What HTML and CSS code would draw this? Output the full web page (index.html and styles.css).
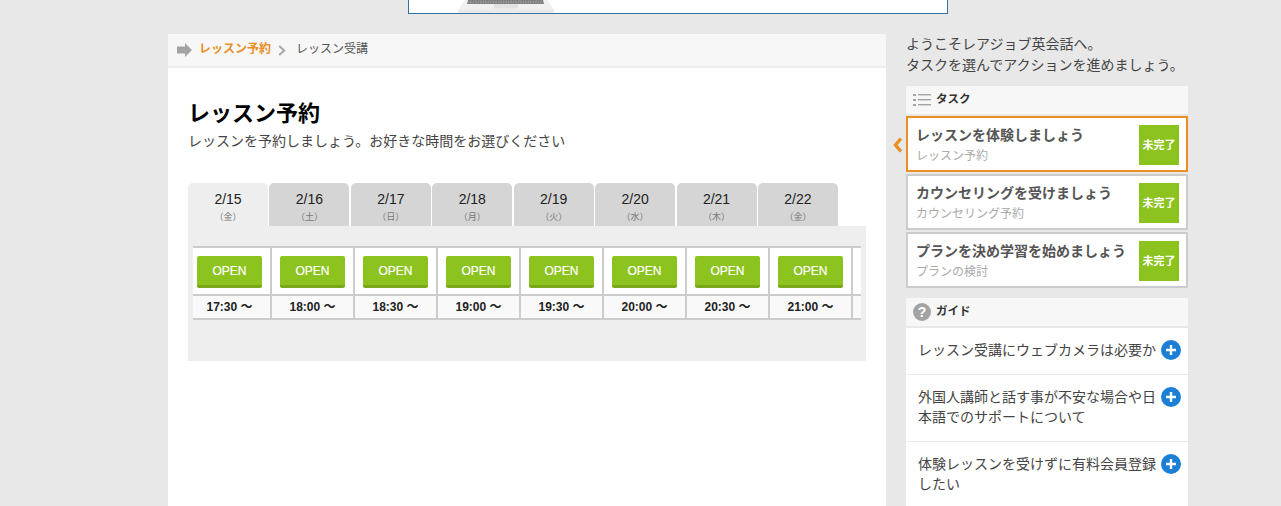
FILE: index.html
```html
<!DOCTYPE html>
<html lang="ja">
<head>
<meta charset="utf-8">
<title>レッスン予約</title>
<link rel="stylesheet" href="styles.css">
</head>
<body>
<div class="banner">
  <svg class="laptop" width="96" height="13" viewBox="0 0 96 13"><path d="M7 0H89L96 9.5V12.5H0V9.5Z" fill="#f0f0f0"/><path d="M0 10H96V12.5H0Z" fill="#e8e8e8"/><path d="M10 0H85L86 4H9Z" fill="#7a7a7a"/><path d="M10 1.2H85M9.5 2.8H85.5" stroke="#c4c4c4" stroke-width=".6" stroke-dasharray="1.5 1"/><rect x="36" y="4" width="24" height="4.5" fill="#e2e2e2"/></svg>
</div>
<div class="page">
  <main class="main">
    <nav class="crumb">
      <svg class="crumb-arrow" width="15" height="14" viewBox="0 0 15 14"><path d="M0 3.5H8V0L15 7L8 14V10.5H0Z" fill="#a3a3a3"/></svg>
      <span class="crumb-current">レッスン予約</span>
      <svg class="crumb-sep" width="8" height="11" viewBox="0 0 8 11"><path d="M1.2 1L6.2 5.5L1.2 10" fill="none" stroke="#a6a6a6" stroke-width="2"/></svg>
      <span class="crumb-next">レッスン受講</span>
    </nav>
    <div class="content">
      <h1 class="title">レッスン予約</h1>
      <p class="lead">レッスンを予約しましょう。お好きな時間をお選びください</p>
      <div class="tabs">
        <div class="tab tab-active"><span class="tab-date">2/15</span><span class="tab-day">（金）</span></div>
        <div class="tab"><span class="tab-date">2/16</span><span class="tab-day">（土）</span></div>
        <div class="tab"><span class="tab-date">2/17</span><span class="tab-day">（日）</span></div>
        <div class="tab"><span class="tab-date">2/18</span><span class="tab-day">（月）</span></div>
        <div class="tab"><span class="tab-date">2/19</span><span class="tab-day">（火）</span></div>
        <div class="tab"><span class="tab-date">2/20</span><span class="tab-day">（水）</span></div>
        <div class="tab"><span class="tab-date">2/21</span><span class="tab-day">（木）</span></div>
        <div class="tab"><span class="tab-date">2/22</span><span class="tab-day">（金）</span></div>
      </div>
      <div class="panel">
        <div class="slots">
          <div class="slot-track">
            <div class="slot"><div class="slot-btn-cell"><span class="open">OPEN</span></div><div class="slot-time">17:30 〜</div></div>
            <div class="slot"><div class="slot-btn-cell"><span class="open">OPEN</span></div><div class="slot-time">18:00 〜</div></div>
            <div class="slot"><div class="slot-btn-cell"><span class="open">OPEN</span></div><div class="slot-time">18:30 〜</div></div>
            <div class="slot"><div class="slot-btn-cell"><span class="open">OPEN</span></div><div class="slot-time">19:00 〜</div></div>
            <div class="slot"><div class="slot-btn-cell"><span class="open">OPEN</span></div><div class="slot-time">19:30 〜</div></div>
            <div class="slot"><div class="slot-btn-cell"><span class="open">OPEN</span></div><div class="slot-time">20:00 〜</div></div>
            <div class="slot"><div class="slot-btn-cell"><span class="open">OPEN</span></div><div class="slot-time">20:30 〜</div></div>
            <div class="slot"><div class="slot-btn-cell"><span class="open">OPEN</span></div><div class="slot-time">21:00 〜</div></div>
            <div class="slot"><div class="slot-btn-cell"></div><div class="slot-time"></div></div>
          </div>
        </div>
      </div>
    </div>
  </main>
  <aside class="side">
    <p class="welcome">ようこそレアジョブ英会話へ。<br>タスクを選んでアクションを進めましょう。</p>
    <div class="side-head">
      <svg width="18" height="14" viewBox="0 0 18 14"><g fill="#a3a3a3"><rect x="0" y="1" width="3" height="2"/><rect x="0" y="6" width="3" height="2"/><rect x="0" y="11" width="3" height="2"/><rect x="5" y="1" width="13" height="1.4"/><rect x="5" y="6" width="13" height="1.4"/><rect x="5" y="11" width="13" height="1.4"/></g></svg>
      <span class="side-label">タスク</span>
    </div>
    <div class="task task-current">
      <svg class="task-pointer" width="10" height="16" viewBox="0 0 10 16"><path d="M8 1.5L2.5 8L8 14.5" fill="none" stroke="#e98f25" stroke-width="3.4"/></svg>
      <div class="task-text"><div class="task-title">レッスンを体験しましょう</div><div class="task-sub">レッスン予約</div></div>
      <div class="badge">未完了</div>
    </div>
    <div class="task">
      <div class="task-text"><div class="task-title">カウンセリングを受けましょう</div><div class="task-sub">カウンセリング予約</div></div>
      <div class="badge">未完了</div>
    </div>
    <div class="task">
      <div class="task-text"><div class="task-title">プランを決め学習を始めましょう</div><div class="task-sub">プランの検討</div></div>
      <div class="badge">未完了</div>
    </div>
    <div class="side-head guide-head">
      <svg width="18" height="18" viewBox="0 0 18 18"><circle cx="9" cy="9" r="9" fill="#a3a3a3"/><text x="9" y="14" text-anchor="middle" class="q-mark">?</text></svg>
      <span class="side-label">ガイド</span>
    </div>
    <div class="guide">
      <div class="guide-item"><span class="guide-text">レッスン受講にウェブカメラは必要か</span><svg class="plus" width="20" height="20" viewBox="0 0 20 20"><circle cx="10" cy="10" r="10" fill="#1b7fd6"/><path d="M10 5V15M5 10H15" stroke="#fff" stroke-width="2.4"/></svg></div>
      <div class="guide-item"><span class="guide-text">外国人講師と話す事が不安な場合や日本語でのサポートについて</span><svg class="plus" width="20" height="20" viewBox="0 0 20 20"><circle cx="10" cy="10" r="10" fill="#1b7fd6"/><path d="M10 5V15M5 10H15" stroke="#fff" stroke-width="2.4"/></svg></div>
      <div class="guide-item"><span class="guide-text">体験レッスンを受けずに有料会員登録したい</span><svg class="plus" width="20" height="20" viewBox="0 0 20 20"><circle cx="10" cy="10" r="10" fill="#1b7fd6"/><path d="M10 5V15M5 10H15" stroke="#fff" stroke-width="2.4"/></svg></div>
    </div>
  </aside>
</div>
</body>
</html>
```
FILE: styles.css
```css
* { box-sizing: border-box; }
html, body { margin: 0; height: 100%; overflow: hidden; }
body {
  background: #e8e8e8;
  font-family: "Liberation Sans", "Noto Sans CJK JP", sans-serif;
  color: #333;
}
.banner {
  width: 540px;
  height: 14px;
  margin-left: 408px;
  padding-left: 49px;
  background: #fff;
  border: 1px solid #36729f;
  border-top: 0;
  overflow: hidden;
}
.laptop { display: block; }
.page {
  display: flex;
  gap: 20px;
  width: 1020px;
  margin: 20px 0 0 168px;
}
.main {
  width: 718px;
  height: 472px;
  background: #fff;
}
.crumb {
  display: flex;
  align-items: center;
  height: 34px;
  padding: 0 0 0 9px;
  background: #f7f7f7;
  border-bottom: 2px solid #eee;
  font-size: 12px;
  line-height: 30px;
}
.crumb-arrow { margin-right: 7px; }
.crumb-current { color: #e98f25; font-weight: bold; margin-bottom: 2px; }
.crumb-sep { margin: 1px 10px 0 7px; }
.crumb-next { color: #555; margin-bottom: 2px; }
.content { padding: 32px 20px 0; }
.title {
  margin: 0;
  font-size: 22px;
  line-height: 28px;
  font-weight: bold;
  color: #000;
}
.lead {
  margin: 0;
  padding-top: 3px;
  font-size: 14px;
  line-height: 20px;
  color: #444;
}
.tabs {
  display: flex;
  gap: 1.43px;
  margin-top: 32px;
}
.tab {
  display: flex;
  flex-direction: column;
  align-items: center;
  width: 80px;
  height: 43px;
  padding-top: 7px;
  background: #d5d5d5;
  border-radius: 5px 5px 0 0;
}
.tab-active { background: #eee; }
.tab-date { font-size: 14px; line-height: 18px; color: #222; }
.tab-day { margin-top: 1px; font-size: 9px; line-height: 16px; color: #777; }
.panel {
  width: 678px;
  height: 135px;
  padding: 20px 5px 0;
  background: #eee;
}
.slots { overflow: hidden; }
.slot-track {
  display: flex;
  margin-left: -4px;
  width: max-content;
}
.slot {
  flex: none;
  width: 83px;
  background: #fff;
  border-right: 2px solid #ccc;
}
.slot-btn-cell {
  display: flex;
  justify-content: center;
  height: 48px;
  padding-top: 8px;
  border-top: 2px solid #ccc;
}
.open {
  display: block;
  width: 65px;
  height: 32px;
  background: #8cc31f;
  border-bottom: 3px solid #7aa81a;
  border-radius: 2px;
  color: #fff;
  font-size: 12px;
  line-height: 31px;
  text-align: center;
  -webkit-text-stroke: 0.2px #fff;
}
.slot-time {
  height: 26px;
  background: #f9f9f9;
  border-top: 2px solid #ccc;
  border-bottom: 2px solid #ccc;
  font-size: 12px;
  line-height: 22px;
  font-weight: bold;
  text-align: center;
  color: #222;
}
.side { width: 282px; }
.welcome {
  margin: 0;
  height: 52px;
  font-size: 14px;
  line-height: 21px;
  color: #444;
}
.side-head {
  display: flex;
  align-items: center;
  gap: 5px;
  height: 28px;
  padding-left: 7px;
  background: #f7f7f7;
  font-size: 11.5px;
  font-weight: bold;
  color: #333;
}
.side-label { margin-bottom: 4px; }
.task {
  position: relative;
  display: flex;
  justify-content: space-between;
  align-items: center;
  height: 56px;
  margin-top: 2px;
  padding: 0 7px 0 8px;
  background: #fff;
  border: 2px solid #ccc;
}
.task-current { border-color: #e98f25; }
.task-pointer {
  position: absolute;
  left: -15px;
  top: 19px;
}
.task-text { margin-top: 3px; }
.task-title {
  font-size: 14px;
  line-height: 21px;
  font-weight: bold;
  color: #555;
}
.task-sub {
  font-size: 12px;
  line-height: 21px;
  color: #aaa;
}
.badge {
  width: 40px;
  height: 40px;
  margin-top: 2px;
  background: #8cc31f;
  color: #fff;
  font-size: 11px;
  line-height: 40px;
  font-weight: bold;
  text-align: center;
}
.guide-head { margin-top: 10px; }
.q-mark {
  font-family: "Liberation Sans", sans-serif;
  font-size: 14px;
  font-weight: bold;
  fill: #fff;
}
.guide {
  margin-top: 2px;
  background: #fff;
}
.guide-item {
  display: flex;
  justify-content: space-between;
  align-items: flex-start;
  padding: 12px 7px 13px 12px;
  border-bottom: 1px solid #e8e8e8;
}
.guide-text {
  width: 240px;
  font-size: 14px;
  line-height: 20.5px;
  color: #444;
}
.plus { flex: none; }
```
